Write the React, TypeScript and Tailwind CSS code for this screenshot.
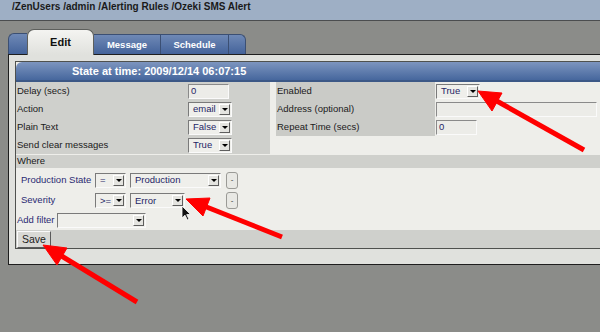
import React from 'react';

// Small native-looking controls, old Firefox/GTK style
function Arrow() {
  return (
    <span className="w-[11px] h-[11px] shrink-0 bg-[#e4e4e0] border border-t-white border-l-white border-r-[#5e5e5e] border-b-[#5e5e5e] flex items-center justify-center">
      <span className="w-0 h-0 border-l-[3px] border-r-[3px] border-t-[3px] border-l-transparent border-r-transparent border-t-black" />
    </span>
  );
}

function Select({ w, value }: { w: string; value: string }) {
  return (
    <div
      className={`${w} h-[15px] flex items-center justify-between bg-[#efefeb] border border-t-[#7a7a7a] border-l-[#7a7a7a] border-r-[#fafafa] border-b-[#fafafa] pl-[4px] pr-[1px] text-[9.5px] leading-none text-[#1f1f66]`}
    >
      <span>{value}</span>
      <Arrow />
    </div>
  );
}

function TextBox({ w, value }: { w: string; value?: string }) {
  return (
    <div
      className={`${w} h-[15px] flex items-center bg-[#ecece8] border border-t-[#8a8a8a] border-l-[#8a8a8a] border-r-[#fafafa] border-b-[#fafafa] pl-[2px] text-[9.5px] leading-none text-[#1f1f66]`}
    >
      {value}
    </div>
  );
}

function MinusButton() {
  return (
    <div className="w-[12px] h-[17px] rounded-[3px] bg-[#e8e8e4] border border-[#9a9a96] flex items-center justify-center text-[8px] leading-none text-[#333]">
      -
    </div>
  );
}

export default function App() {
  return (
    <div className="w-[600px] h-[332px] bg-[#8b8c89] relative overflow-hidden font-['Liberation_Sans',Arial,sans-serif]">
      {/* Breadcrumb */}
      <div className="h-[21px] bg-[#9eafc5] border-b border-[#4b4d4f] pl-[12px] pt-[1px] text-[10px] font-bold leading-[12px] text-[#1a1a1a]">
        /ZenUsers /admin /Alerting Rules /Ozeki SMS Alert
      </div>

      {/* Tabs */}
      <div className="ml-[8px] mt-[8px] h-[25px] flex items-end relative z-10">
        <div className="w-[19px] h-[21px] rounded-tl-[6px] bg-gradient-to-b from-[#6f89b6] to-[#44639a] border-t border-l border-[#3b4f73]" />
        <div className="w-[67px] h-[26px] translate-y-[1px] rounded-t-[7px] bg-gradient-to-b from-[#f4f4f1] to-[#e0e1dd] border-t border-l border-r border-[#5d5f5c] flex items-center justify-center text-[11px] font-bold text-[#111]">
          Edit
        </div>
        <div className="w-[67px] h-[20px] bg-gradient-to-b from-[#6f89b6] to-[#44639a] border-t border-r border-[#3b4f73] flex items-center justify-center text-[9.5px] font-bold text-white pt-[2px]">
          Message
        </div>
        <div className="w-[68px] h-[20px] bg-gradient-to-b from-[#6f89b6] to-[#44639a] border-t border-r border-[#3b4f73] flex items-center justify-center text-[9.5px] font-bold text-white pt-[2px]">
          Schedule
        </div>
        <div className="w-[17px] h-[20px] rounded-tr-[6px] bg-gradient-to-b from-[#6f89b6] to-[#44639a] border-t border-r border-[#3b4f73]" />
      </div>

      {/* Panel */}
      <div className="ml-[8px] w-[592px] bg-[#e0e1dd] border-t border-l border-b border-[#1e1e1e] pt-[6px] pl-[6px] pb-[15px]">
        <div className="bg-[#eeeeea] border-t border-l border-b border-[#4f514e]">
          <div className="h-[20px] rounded-tl-[6px] bg-gradient-to-b from-[#7d95bf] to-[#46679d] border-b-2 border-[#3c5886] pl-[56px] pt-[2px] text-[11px] font-bold leading-[14px] text-white">
            State at time: 2009/12/14 06:07:15
          </div>

          {/* Main fields */}
          <div className="flex text-[9.5px] text-[#1a1a1a]">
            <div className="w-[254px] bg-[#cfd0cc]">
              {[
                { label: 'Delay (secs)', ctrl: <TextBox w="w-[41px]" value="0" /> },
                { label: 'Action', ctrl: <Select w="w-[44px]" value="email" /> },
                { label: 'Plain Text', ctrl: <Select w="w-[44px]" value="False" /> },
                { label: 'Send clear messages', ctrl: <Select w="w-[44px]" value="True" /> },
              ].map((r) => (
                <div key={r.label} className="h-[18px] flex items-center">
                  <span className="w-[172px] pl-[1px] pt-[1px]">{r.label}</span>
                  {r.ctrl}
                </div>
              ))}
            </div>
            <div className="w-[6px]" />
            <div className="flex-1 flex flex-col">
              {[
                { label: 'Enabled', ctrl: <Select w="w-[44px]" value="True" /> },
                { label: 'Address (optional)', ctrl: <TextBox w="w-[161px]" /> },
                { label: 'Repeat Time (secs)', ctrl: <TextBox w="w-[41px]" value="0" /> },
              ].map((r) => (
                <div key={r.label} className="h-[18px] flex items-center">
                  <span className="w-[159px] h-full flex items-center pl-[1px] pt-[1px] bg-[#cacbc7]">{r.label}</span>
                  <div className="pl-[1px]">{r.ctrl}</div>
                </div>
              ))}
            </div>
          </div>

          {/* Where */}
          <div className="mt-[1px] h-[13px] bg-[#cfd0cc] flex items-center pl-[1px] text-[9.5px] text-[#1a1a1a]">
            Where
          </div>
          <div className="pt-[2px] pb-[1px] text-[9.5px] text-[#2a2a72]">
            <div className="h-[20px] flex items-center">
              <span className="w-[79px] pl-[5px]">Production State</span>
              <Select w="w-[31px]" value="=" />
              <div className="w-[4px]" />
              <Select w="w-[91px]" value="Production" />
              <div className="w-[5px]" />
              <MinusButton />
            </div>
            <div className="h-[21px] flex items-center">
              <span className="w-[79px] pl-[5px]">Severity</span>
              <Select w="w-[31px]" value=">=" />
              <div className="w-[4px]" />
              <Select w="w-[55px]" value="Error" />
              <div className="w-[41px]" />
              <MinusButton />
            </div>
            <div className="h-[18px] flex items-center">
              <span className="w-[41px] pl-[1px]">Add filter</span>
              <Select w="w-[89px]" value="" />
            </div>
          </div>

          {/* Save */}
          <div className="h-[18px] bg-[#cfd0cc] flex items-center pl-[1px]">
            <div className="w-[34px] h-[17px] bg-[#d9d9d5] border border-t-[#fafafa] border-l-[#fafafa] border-r-[#5a5a5a] border-b-[#5a5a5a] flex items-center justify-center text-[10.5px] leading-none text-[#222]">
              Save
            </div>
          </div>
        </div>
      </div>

      {/* Red annotation arrows and mouse cursor */}
      <svg className="absolute inset-0 pointer-events-none" width="600" height="332" viewBox="0 0 600 332">
        <g fill="#ff0000" stroke="#ff0000">
          <line x1="584" y1="150" x2="495" y2="100" strokeWidth="5" />
          <polygon points="478,91 502,93 492,111" strokeWidth="1" />
          <line x1="282" y1="237" x2="204" y2="206" strokeWidth="5" />
          <polygon points="186,199 210,198 203,216" strokeWidth="1" />
          <line x1="137" y1="302" x2="60" y2="255" strokeWidth="5" />
          <polygon points="43,245 67,248 57,265" strokeWidth="1" />
        </g>
        <path
          d="M182 206 L182 218 L185 215.2 L187.4 220 L189 219.3 L186.7 214.6 L190.5 214.4 Z"
          fill="#111"
          stroke="#fff"
          strokeWidth="0.8"
        />
      </svg>
    </div>
  );
}
